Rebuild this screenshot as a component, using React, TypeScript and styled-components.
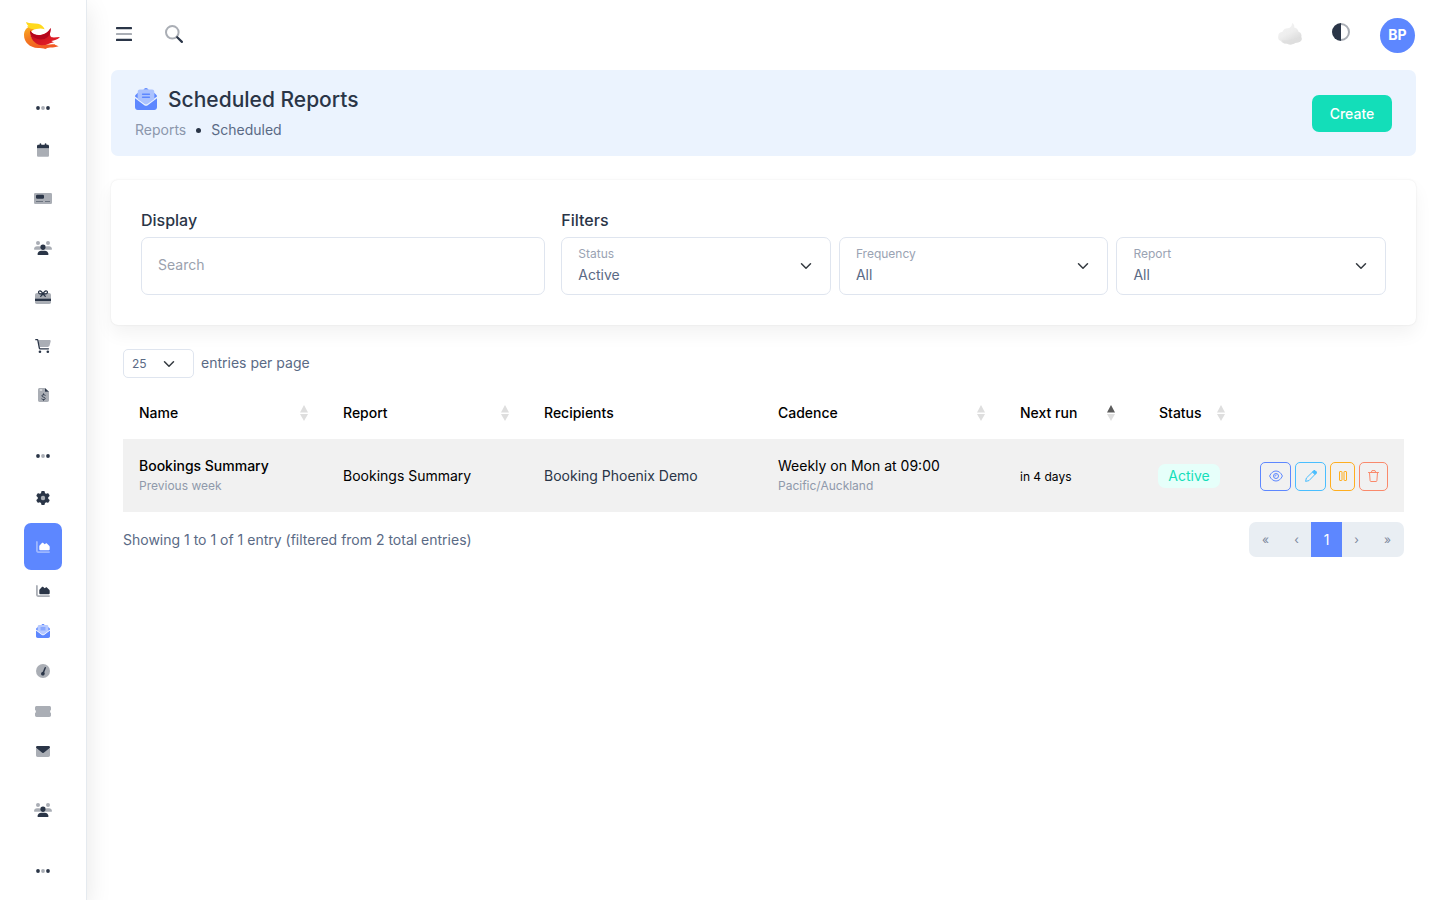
import React from "react";
import styled, { createGlobalStyle } from "styled-components";
import { FaGear } from "react-icons/fa6";

const ink = "#2a3547";
const body = "#5a6a85";
const blue = "#5d87ff";

const GlobalStyle = createGlobalStyle`
  *, *::before, *::after { box-sizing: border-box; }
  body {
    margin: 0;
    background: #fff;
    color: ${body};
    font-family: Inter, "Liberation Sans", sans-serif;
    font-size: 14px;
    font-weight: 400;
    line-height: 20px;
  }
  button, input, select { font: inherit; color: inherit; }
  a { color: inherit; text-decoration: none; }
  svg { display: block; flex: none; overflow: visible; }
`;

/* ---------- icons ---------- */

type IconProps = { w?: number; h?: number };

const Dots = () => (
  <svg width="14" height="14" viewBox="0 0 14 14" fill="currentColor">
    <circle cx="2" cy="7" r="1.9" />
    <circle cx="7" cy="7" r="1.9" opacity=".4" />
    <circle cx="12" cy="7" r="1.9" />
  </svg>
);

const CalendarIcon = () => (
  <svg width="12" height="14" viewBox="0 0 448 512" fill="currentColor">
    <path d="M96 32V64H48C21.500 64 0 85.500 0 112v80H448V112c0-26.500-21.500-48-48-48H352V32c0-17.700-14.300-32-32-32s-32 14.300-32 32V64H160V32c0-17.700-14.300-32-32-32S96 14.300 96 32z" />
    <path opacity=".4" d="M448 192H0V464c0 26.500 21.500 48 48 48H400c26.500 0 48-21.500 48-48V192z" />
  </svg>
);

const CardIcon = () => (
  <svg width="18" height="11" viewBox="0 0 18 11" fill="currentColor">
    <rect width="18" height="11" rx="1.300" opacity=".4" />
    <rect x="2" y="1.700" width="8" height="4" rx="1.200" />
    <path d="M2 8.500h7M11 8.500h5" stroke="currentColor" strokeWidth=".8" opacity=".6" />
  </svg>
);

const UsersIcon = () => (
  <svg width="18" height="14" viewBox="0 0 18 14" fill="currentColor">
    <g opacity=".4">
      <circle cx="4" cy="2" r="2" />
      <circle cx="14" cy="2" r="2" />
      <path d="M0 8.300C0 6.500 1.300 5.300 3 5.300h1.800c.4 0 .8.100 1.200.2-.1 1.300.3 2.500 1.200 3.300H.6c-.3 0-.6-.2-.6-.5zM18 8.300c0-1.800-1.300-3-3-3h-1.800c-.4 0-.8.100-1.200.2.1 1.300-.3 2.500-1.200 3.300h6.600c.3 0 .6-.2.600-.5z" />
    </g>
    <circle cx="9" cy="6.200" r="2.700" />
    <path d="M3.500 13.300C3.500 11.200 5.200 9.700 7.200 9.700h3.600c2 0 3.700 1.500 3.700 3.600 0 .4-.3.700-.7.700H4.200c-.4 0-.7-.3-.7-.7z" />
  </svg>
);

const GiftIcon = () => (
  <svg width="16" height="14" viewBox="0 0 16 14" fill="currentColor">
    <path opacity=".4" d="M2 3h12c1.100 0 2 .9 2 2v7.300c0 1-.7 1.700-1.700 1.700H1.700C.7 14 0 13.300 0 12.300V5c0-1.100.9-2 2-2z" />
    <path d="M0 8.700h16V11H0z" />
    <g fill="none" stroke="currentColor" strokeWidth="1.300" strokeLinecap="round">
      <path d="M8 4C6.800 1.200 5.400.6 4.300 1 3.200 1.500 3.300 3 4.400 3.600 5.400 4.100 6.800 4 8 4zM8 4c1.200-2.800 2.600-3.400 3.700-3 1.100.5 1 2-.1 2.600C10.600 4.100 9.200 4 8 4zM8 4L5.700 6.400M8 4l2.300 2.400" />
    </g>
  </svg>
);

const CartIcon = () => (
  <svg width="16" height="14" viewBox="0 0 576 512" fill="currentColor">
    <path opacity=".4" d="M120 32H531c26.300 0 45.500 25 38.600 50.400l-41 152.300c-8.500 31.400-37 53.300-69.500 53.300H168z" />
    <path d="M0 24C0 10.700 10.700 0 24 0H69.500c28 0 50 18 55 45L176 316.500c2.200 11.300 12.100 19.500 23.600 19.500H488c13.300 0 24 10.700 24 24s-10.700 24-24 24H199.700c-34.600 0-64.300-24.600-70.700-58.500L77.400 54.500c-.7-3.800-4-6.500-7.900-6.500H24C10.700 48 0 37.300 0 24z" />
    <circle cx="176" cy="464" r="48" />
    <circle cx="464" cy="464" r="48" />
  </svg>
);

const InvoiceIcon = () => (
  <svg width="11" height="14" viewBox="0 0 11 14">
    <path fill="currentColor" opacity=".4" d="M1.700 0H7v3.500h4v8.800c0 1-.7 1.700-1.700 1.700H1.700C.7 14 0 13.300 0 12.300V1.700C0 .7.700 0 1.700 0z" />
    <path fill="currentColor" d="M7 0l4 3.700H7z" />
    <path d="M1.800 2h2.400" stroke="#fff" strokeWidth="1" />
    <path fill="none" stroke="currentColor" strokeWidth=".9" strokeLinecap="round" d="M7.200 7.200C6.300 6.500 3.900 6.400 3.900 7.900c0 1.500 3.300 1 3.300 2.600 0 1.500-2.500 1.300-3.400.5M5.500 5.800v.7M5.500 11.700v.6" />
  </svg>
);

const GearIcon = () => (
  <svg width="14" height="14" viewBox="0 0 512 512" fill="currentColor">
    <circle cx="256" cy="256" r="90" opacity=".4" />
    <FaGear size={512} />
  </svg>
);

const ChartIcon = () => (
  <svg width="14" height="12" viewBox="0 0 14 12" fill="currentColor">
    <path opacity=".4" d="M.9 0c.5 0 .9.400.9.900v8.700c0 .4.200.6.600.6h10.700c.5 0 .9.400.9.900s-.4.900-.9.900H2.200C1 12 0 11 0 9.800V.9C0 .4.400 0 .9 0z" />
    <path d="M3.300 8.300V5.300c0-.2.100-.5.300-.7L5.900 2c.4-.4 1-.4 1.400 0L8.600 3.200l1.200-.8c.3-.3.800-.3 1.100 0l2.300 2.400c.3.300.5.800.5 1.200v2.300c0 .5-.4.900-.9.900H4.200c-.5 0-.9-.4-.9-.9z" />
  </svg>
);

const MailOpenIcon = ({ w = 14, h = 14 }: IconProps) => (
  <svg width={w} height={h} viewBox="0 0 512 512" fill={blue}>
    <path d="M215 17c24-20 58-20 82 0l20 15H195zM64 112V244L0 198c0-20 10-38 24-48zM448 112l40 38c14 10 24 28 24 48l-64 46z" />
    <path opacity=".45" d="M112 32H400c26 0 48 22 48 48V260L290 375c-20 15-48 15-68 0L64 260V80c0-26 22-48 48-48z" />
    <path d="M176 128H336c9 0 16 7 16 16s-7 16-16 16H176c-9 0-16-7-16-16s7-16 16-16zM176 200H336c9 0 16 7 16 16s-7 16-16 16H176c-9 0-16-7-16-16s7-16 16-16z" />
    <path d="M0 238L216 400c24 18 56 18 80 0L512 238V448c0 35-29 64-64 64H64c-35 0-64-29-64-64z" />
  </svg>
);

const GaugeIcon = () => (
  <svg width="14" height="14" viewBox="0 0 14 14" fill="currentColor">
    <circle cx="7" cy="7" r="7" opacity=".4" />
    <path d="M9.600 3.100c.4.200.5.600.3 1L8.300 8.300c.6.800.6 2-.1 2.700-.8.800-2.100.7-2.800-.1-.8-1.200-.2-2.900 1.400-3.200l1.800-4.200c.2-.4.600-.6 1-.4z" />
  </svg>
);

const TicketIcon = () => (
  <svg width="16" height="11" viewBox="0 0 16 11" fill="currentColor" opacity=".4">
    <path d="M1.700 0h12.600C15.300 0 16 .7 16 1.700v2.100C15.400 4.100 15.100 4.700 15.100 5.500S15.400 6.900 16 7.200v2.100c0 1-.7 1.700-1.700 1.700H1.700C.7 11 0 10.300 0 9.300V7.200c.6-.3.900-.9.900-1.700S.6 4.100 0 3.800V1.700C0 .7.700 0 1.700 0z" />
  </svg>
);

const MailIcon = () => (
  <svg width="14" height="11" viewBox="0 0 14 11" fill="currentColor">
    <path opacity=".4" d="M0 2l7 5 7-5v7.300c0 1-.7 1.700-1.700 1.700H1.700C.7 11 0 10.300 0 9.300z" />
    <path d="M1.300 0h11.400c.7 0 1.300.6 1.300 1.300 0 .4-.2.800-.5 1L7.800 6.700c-.5.300-1.100.3-1.600 0L.5 2.300C.2 2.100 0 1.700 0 1.300 0 .6.600 0 1.300 0z" />
  </svg>
);

const MenuIcon = () => (
  <svg width="16" height="14" viewBox="0 0 16 14" fill="currentColor">
    <rect width="16" height="2.200" rx=".6" />
    <rect y="5.900" width="16" height="2.200" rx=".6" opacity=".4" />
    <rect y="11.800" width="16" height="2.200" rx=".6" />
  </svg>
);

const SearchIcon = () => (
  <svg width="18" height="18" viewBox="0 0 18 18" fill="none" stroke="currentColor">
    <circle cx="7.300" cy="7.300" r="6.300" strokeWidth="2" opacity=".4" />
    <path d="M12.200 12.200l4.700 4.700" strokeWidth="2.200" strokeLinecap="round" />
  </svg>
);

const ContrastIcon = () => (
  <svg width="18" height="18" viewBox="0 0 18 18" fill="currentColor">
    <path opacity=".4" d="M9 0a9 9 0 0 1 0 18v-2A7 7 0 0 0 9 2z" />
    <path d="M9 0a9 9 0 0 0 0 18z" />
  </svg>
);

const CloudIcon = () => (
  <svg width="24" height="22" viewBox="0 0 24 22">
    <defs>
      <linearGradient id="cloud" x1="0" y1="0" x2=".6" y2="1">
        <stop offset="0" stopColor="#f5f5f5" />
        <stop offset=".55" stopColor="#eeeeee" />
        <stop offset="1" stopColor="#d9d9d9" />
      </linearGradient>
    </defs>
    <path fill="url(#cloud)" d="M14 0c2 1 2.700 2.600 2.200 4.500 2.500.5 4 2 4.300 4.300C23 9.500 24 12 23.300 14c1 2.600-.3 4.800-3 5.200-2 .3-3.300.7-4.800 1.500-2 1-4.700.9-6.600-.2C6.500 21 3.500 19.700 3 18 .6 17.500-.4 15.500.3 13 .3 10.500 2 9 4.500 8.800 5.500 6 7.500 5 10 5.200 12.500 4.800 14.300 3 14 0z" />
    <path fill="#dedede" opacity=".8" d="M4 17.500c5 .5 11-1.500 19.300-3 .9 2.500-.4 4.300-3 4.700-2 .3-3.300.7-4.800 1.500-2 1-4.700.9-6.600-.2C6.800 20.900 4.600 19.500 4 17.500z" />
  </svg>
);

const PhoenixLogo = () => (
  <svg width="36" height="27" viewBox="0 0 108 81">
    <defs>
      <linearGradient id="flame" x1="0" y1="0" x2=".5" y2="1">
        <stop offset="0" stopColor="#fbb321" />
        <stop offset=".5" stopColor="#f47a20" />
        <stop offset="1" stopColor="#f15a24" />
      </linearGradient>
      <linearGradient id="wing" x1="0" y1="0" x2="1" y2="1">
        <stop offset="0" stopColor="#b8091f" />
        <stop offset="1" stopColor="#ec2227" />
      </linearGradient>
    </defs>
    <path fill="url(#flame)" d="M24 12C8 14 0 26 0 39c0 22 17 38 42 39 8 0 16 0 22 3l6-3c10-2 22 0 34-5-6-2-9-3-12-6-24 1-52 1-64-13C17 42 16 26 34 20z" />
    <path fill="url(#wing)" d="M18 27c0 24 14 39 34 43 16 1 24-6 38-9-3-2-5-2-8-4 9-2 19-4 26-12-10 1-18 2-25 1C74 40 80 28 80 18 68 40 34 48 18 27z" />
    <path fill="#b5061d" d="M18 25c8 14 24 18 36 14 12-3 20-10 26-21 1 18-8 32-24 34-18 2-37-8-38-27z" />
    <path fill="#ffd91c" d="M6 0c12 6 24 3 36 5 10 2 16 8 20 17-10-4-16-3-25-1C24 23 16 20 9 12l5 1C9 9 8 5 6 0z" />
  </svg>
);

const Chevron = () => (
  <svg width="12" height="12" viewBox="0 0 16 16" fill="none" stroke="#343a40" strokeWidth="2" strokeLinecap="round" strokeLinejoin="round">
    <path d="m2 5 6 6 6-6" />
  </svg>
);

const EyeIcon = () => (
  <svg width="14" height="12" viewBox="0 0 14 12" fill="none" stroke={blue}>
    <path d="M.6 6C2 2.800 4.300 1 7 1s5 1.800 6.400 5C12 9.200 9.700 11 7 11S2 9.200.6 6z" />
    <circle cx="7" cy="6" r="2.500" />
    <path d="M7 4.500C7.200 5.600 6.600 6.200 5.500 6" />
  </svg>
);

const PencilIcon = () => (
  <svg width="12" height="12" viewBox="0 0 12 12" fill="none" stroke="#49beff" strokeLinejoin="round">
    <path d="M.6 11.400L1.400 8 8.700.9c.5-.4 1-.4 1.500 0l.9.900c.4.500.4 1 0 1.500L4 10.600z" />
    <path fill="#49beff" d="M7.500 2.100L8.700.9c.5-.4 1-.4 1.500 0l.9.900c.4.500.4 1 0 1.500L9.900 4.500z" />
  </svg>
);

const PauseIcon = () => (
  <svg width="8" height="10" viewBox="0 0 8 10" fill="none" stroke="#ffae1f">
    <rect x=".5" y=".5" width="2.500" height="9" rx=".5" />
    <rect x="5" y=".5" width="2.500" height="9" rx=".5" />
  </svg>
);

const TrashIcon = () => (
  <svg width="11" height="12" viewBox="0 0 11 12" fill="none" stroke="#fa896b" strokeLinecap="round" strokeLinejoin="round">
    <path d="M.5 2.500h10M3.300 2.300L4 .6h3l.7 1.700M1.500 2.700l.6 8c0 .5.300.8.800.8h5.200c.5 0 .8-.3.800-.8l.6-8" />
  </svg>
);

/* ---------- shell ---------- */

const Shell = styled.div`
  display: flex;
  min-height: 100vh;
`;

const Sidebar = styled.aside`
  flex: 0 0 87px;
  padding: 0 24px;
  background: #fff;
  border-right: 1px solid #e5eaef;
  box-shadow: 0 8px 24px rgba(0, 0, 0, 0.1);
`;

const Brand = styled.a`
  display: flex;
  align-items: center;
  height: 70px;
`;

const NavList = styled.ul`
  list-style: none;
  margin: 0;
  padding: 2px 0 0;
`;

const NavCaption = styled.li`
  display: flex;
  justify-content: center;
  height: 54px;
  padding-top: 29px;
  color: ${ink};
`;

const NavItem = styled.li<{ $sub?: boolean; $spaced?: boolean }>`
  margin-top: ${(p) => (p.$spaced ? 15 : 0)}px;
  margin-bottom: ${(p) => (p.$sub ? 0 : 2)}px;
`;

const SubNav = styled.ul`
  list-style: none;
  margin: 0;
  padding: 1px 0 0;
`;

const NavLink = styled.a<{ $active?: boolean; $sub?: boolean }>`
  display: flex;
  align-items: center;
  justify-content: center;
  height: ${(p) => (p.$sub ? 40 : 47)}px;
  border-radius: 7px;
  color: ${(p) => (p.$active ? "#fff" : ink)};
  background: ${(p) => (p.$active ? blue : "transparent")};
`;

const Main = styled.main`
  flex: 1;
  min-width: 0;
  padding: 0 24px;
`;

const Topbar = styled.header`
  display: flex;
  align-items: center;
  height: 70px;
  padding: 0 1px 0 5px;
`;

const IconButton = styled.button`
  display: flex;
  padding: 0 0 2px;
  border: 0;
  background: none;
  color: ${ink};
  cursor: pointer;
`;

const TopGroup = styled.div<{ $gap: number }>`
  display: flex;
  align-items: center;
  gap: ${(p) => p.$gap}px;
`;

const TopRight = styled(TopGroup)`
  margin-left: auto;
`;

const ThemeButton = styled(IconButton)`
  padding-bottom: 6px;
`;

const Avatar = styled.button`
  width: 35px;
  height: 35px;
  padding: 0;
  border: 0;
  border-radius: 50%;
  background: ${blue};
  color: #fff;
  font-weight: 700;
`;

/* ---------- page header ---------- */

const PageHeader = styled.section`
  display: flex;
  align-items: center;
  justify-content: space-between;
  height: 86px;
  padding: 0 24px;
  border-radius: 7px;
  background: #ebf3fe;
`;

const Title = styled.h1`
  display: flex;
  align-items: flex-start;
  gap: 11px;
  margin: 0 0 6px;
  color: ${ink};
  font-size: 21px;
  font-weight: 500;
  line-height: 28px;
`;

const TitleIcon = styled.span`
  padding-top: 2px;
`;

const Crumbs = styled.nav`
  display: flex;
  align-items: center;
  gap: 10px;
`;

const CrumbLink = styled.a`
  color: #8c97ac;
`;

const CrumbDot = styled.span`
  width: 5px;
  height: 5px;
  border-radius: 50%;
  background: ${ink};
`;

const CreateButton = styled.button`
  height: 37px;
  padding: 1px 16px 0;
  min-width: 80px;
  border: 0;
  border-radius: 7px;
  background: #13deb9;
  color: #fff;
  font-weight: 500;
`;

/* ---------- filters ---------- */

const FilterCard = styled.section`
  display: grid;
  grid-template-columns: repeat(3, 1fr);
  gap: 16px;
  margin: 24px 0;
  padding: 30px;
  border-radius: 7px;
  background: #fff;
  box-shadow: 0 0 2px rgba(0, 0, 0, 0.1), 0 9px 18px rgba(0, 0, 0, 0.05);
`;

const FilterGroup = styled.div<{ $span?: number }>`
  grid-column: span ${(p) => p.$span ?? 1};
`;

const GroupTitle = styled.h2`
  margin: 0 0 7px;
  color: ${ink};
  font-size: 16px;
  font-weight: 500;
  line-height: 20px;
`;

const SearchInput = styled.input`
  display: block;
  width: 100%;
  height: 58px;
  padding: 0 16px 3px;
  border: 1px solid #dfe5ef;
  border-radius: 7px;
  outline: 0;
  background: transparent;
  &::placeholder { color: #9aa1ad; opacity: 1; }
`;

const SelectRow = styled.div`
  display: grid;
  grid-template-columns: repeat(3, 1fr);
  gap: 8px;
`;

const SelectBox = styled.div`
  position: relative;
`;

const FloatingLabel = styled.label`
  position: absolute;
  top: 8px;
  left: 17px;
  color: #9aa3b3;
  font-size: 12px;
  line-height: 18px;
  pointer-events: none;
`;

const Select = styled.select<{ $small?: boolean }>`
  display: block;
  appearance: none;
  width: ${(p) => (p.$small ? "71px" : "100%")};
  height: ${(p) => (p.$small ? 29 : 58)}px;
  padding: ${(p) => (p.$small ? "0 32px 0 8px" : "18px 40px 0 16px")};
  border: 1px solid #dfe5ef;
  border-radius: ${(p) => (p.$small ? 5 : 7)}px;
  background: transparent;
  font-size: ${(p) => (p.$small ? 12 : 14)}px;
`;

const SelectArrow = styled.span`
  position: absolute;
  top: 50%;
  right: 19px;
  transform: translateY(-50%);
  pointer-events: none;
`;

/* ---------- table ---------- */

const TableArea = styled.section`
  padding: 0 12px;
`;

const LengthRow = styled.div`
  display: flex;
  gap: 7px;
  margin-bottom: 9px;
  line-height: 28px;
`;

const Table = styled.table`
  width: 100%;
  table-layout: fixed;
  border-collapse: collapse;
  color: #000;
`;

const Th = styled.th`
  height: 52px;
  padding: 0 16px;
  text-align: left;
  font-weight: 500;
`;

const HeadCell = styled.div<{ $center?: boolean }>`
  display: flex;
  align-items: center;
  justify-content: space-between;
  padding: 0 3px 0 ${(p) => (p.$center ? 9 : 0)}px;
`;

const SortMark = styled.svg`
  width: 8px;
  height: 16px;
`;

const Td = styled.td<{ $center?: boolean }>`
  height: 73px;
  padding: 1px 16px 0;
  background: #f1f1f1;
  text-align: ${(p) => (p.$center ? "center" : "left")};
  white-space: nowrap;
`;

const Strong = styled.div`
  font-weight: 500;
`;

const Muted = styled.div`
  color: #8f99ab;
  font-size: 12px;
`;

const Small = styled.span`
  font-size: 12px;
`;

const Dim = styled.span`
  color: ${ink};
`;

const Badge = styled.span`
  display: inline-block;
  height: 24px;
  padding: 0 10px;
  border-radius: 7px;
  background: #e6fffa;
  color: #13deb9;
  line-height: 24px;
`;

const Actions = styled.div`
  display: flex;
  gap: 4px;
`;

const ActionButton = styled.button<{ $color: string; $width: number }>`
  display: flex;
  align-items: center;
  justify-content: center;
  width: ${(p) => p.$width}px;
  height: 29px;
  padding: 0;
  border: 1px solid ${(p) => p.$color};
  border-radius: 5px;
  background: transparent;
`;

const TableFooter = styled.div`
  display: flex;
  align-items: center;
  justify-content: space-between;
  padding-top: 10px;
`;

const Pager = styled.nav`
  display: flex;
  height: 35px;
  border-radius: 7px;
  overflow: hidden;
  background: #e9eef3;
`;

const PageButton = styled.button<{ $current?: boolean; $width: number }>`
  width: ${(p) => p.$width}px;
  padding: 0;
  border: 0;
  background: ${(p) => (p.$current ? blue : "transparent")};
  color: ${(p) => (p.$current ? "#fff" : "#7c879c")};
  font-size: ${(p) => (p.$current ? 14 : 12)}px;
`;

const Sort = ({ asc }: { asc?: boolean }) => (
  <SortMark viewBox="0 0 8 16" fill="#dedede">
    <path d="M4 0l4 7.500H0z" fill={asc ? "#5c5c5c" : "#dedede"} />
    <path d="M4 16L0 9h8z" />
  </SortMark>
);

const columns: { name: string; width: number; sort?: boolean; asc?: boolean; center?: boolean }[] = [
  { name: "Name", width: 204, sort: true },
  { name: "Report", width: 201, sort: true },
  { name: "Recipients", width: 234 },
  { name: "Cadence", width: 242, sort: true },
  { name: "Next run", width: 130, sort: true, asc: true },
  { name: "Status", width: 110, sort: true, center: true },
  { name: "", width: 160 },
];

const filters = [
  { id: "status", label: "Status", value: "Active" },
  { id: "frequency", label: "Frequency", value: "All" },
  { id: "report", label: "Report", value: "All" },
];

const primaryNav = [
  { label: "Calendar", icon: <CalendarIcon /> },
  { label: "Bookings", icon: <CardIcon /> },
  { label: "Customers", icon: <UsersIcon /> },
  { label: "Gift cards", icon: <GiftIcon /> },
  { label: "Orders", icon: <CartIcon /> },
  { label: "Invoices", icon: <InvoiceIcon /> },
];

const reportNav = [
  { label: "Overview", icon: <ChartIcon /> },
  { label: "Scheduled reports", icon: <MailOpenIcon /> },
  { label: "Performance", icon: <GaugeIcon /> },
  { label: "Tickets", icon: <TicketIcon /> },
  { label: "Messages", icon: <MailIcon /> },
];

export default function App() {
  return (
    <>
      <GlobalStyle />
      <Shell>
        <Sidebar>
          <Brand href="#" aria-label="Home"><PhoenixLogo /></Brand>
          <NavList>
            <NavCaption><Dots /></NavCaption>
            {primaryNav.map((n) => (
              <NavItem key={n.label}>
                <NavLink href="#" aria-label={n.label}>{n.icon}</NavLink>
              </NavItem>
            ))}
            <NavCaption><Dots /></NavCaption>
            <NavItem><NavLink href="#" aria-label="Settings"><GearIcon /></NavLink></NavItem>
            <NavItem $sub>
              <NavLink href="#" aria-label="Reports" $active><ChartIcon /></NavLink>
              <SubNav>
                {reportNav.map((n) => (
                  <NavItem key={n.label} $sub>
                    <NavLink href="#" aria-label={n.label} $sub>{n.icon}</NavLink>
                  </NavItem>
                ))}
              </SubNav>
            </NavItem>
            <NavItem $spaced><NavLink href="#" aria-label="Team"><UsersIcon /></NavLink></NavItem>
            <NavCaption><Dots /></NavCaption>
          </NavList>
        </Sidebar>

        <Main>
          <Topbar>
            <TopGroup $gap={33}>
              <IconButton aria-label="Toggle menu"><MenuIcon /></IconButton>
              <IconButton aria-label="Search"><SearchIcon /></IconButton>
            </TopGroup>
            <TopRight $gap={30}>
              <IconButton aria-label="Cloud"><CloudIcon /></IconButton>
              <ThemeButton aria-label="Toggle theme"><ContrastIcon /></ThemeButton>
              <Avatar>BP</Avatar>
            </TopRight>
          </Topbar>

          <PageHeader>
            <div>
              <Title><TitleIcon><MailOpenIcon w={22} h={22} /></TitleIcon>Scheduled Reports</Title>
              <Crumbs aria-label="Breadcrumb">
                <CrumbLink href="#">Reports</CrumbLink>
                <CrumbDot />
                <span>Scheduled</span>
              </Crumbs>
            </div>
            <CreateButton>Create</CreateButton>
          </PageHeader>

          <FilterCard>
            <FilterGroup>
              <GroupTitle>Display</GroupTitle>
              <SearchInput type="search" placeholder="Search" aria-label="Search" />
            </FilterGroup>
            <FilterGroup $span={2}>
              <GroupTitle>Filters</GroupTitle>
              <SelectRow>
                {filters.map((f) => (
                  <SelectBox key={f.id}>
                    <FloatingLabel htmlFor={f.id}>{f.label}</FloatingLabel>
                    <Select id={f.id}><option>{f.value}</option></Select>
                    <SelectArrow><Chevron /></SelectArrow>
                  </SelectBox>
                ))}
              </SelectRow>
            </FilterGroup>
          </FilterCard>

          <TableArea>
            <LengthRow>
              <SelectBox>
                <Select id="length" $small><option>25</option></Select>
                <SelectArrow><Chevron /></SelectArrow>
              </SelectBox>
              <label htmlFor="length">entries per page</label>
            </LengthRow>

            <Table>
              <colgroup>
                {columns.map((c) => <col key={c.name} width={c.width} />)}
              </colgroup>
              <thead>
                <tr>
                  {columns.map((c) => (
                    <Th key={c.name} scope="col">
                      <HeadCell $center={c.center}>
                        {c.name}
                        {c.sort && <Sort asc={c.asc} />}
                      </HeadCell>
                    </Th>
                  ))}
                </tr>
              </thead>
              <tbody>
                <tr>
                  <Td><Strong>Bookings Summary</Strong><Muted>Previous week</Muted></Td>
                  <Td>Bookings Summary</Td>
                  <Td><Dim>Booking Phoenix Demo</Dim></Td>
                  <Td><div>Weekly on Mon at 09:00</div><Muted>Pacific/Auckland</Muted></Td>
                  <Td><Small>in 4 days</Small></Td>
                  <Td $center><Badge>Active</Badge></Td>
                  <Td>
                    <Actions>
                      <ActionButton $color={blue} $width={31} aria-label="View"><EyeIcon /></ActionButton>
                      <ActionButton $color="#49beff" $width={31} aria-label="Edit"><PencilIcon /></ActionButton>
                      <ActionButton $color="#ffae1f" $width={25} aria-label="Pause"><PauseIcon /></ActionButton>
                      <ActionButton $color="#fa896b" $width={29} aria-label="Delete"><TrashIcon /></ActionButton>
                    </Actions>
                  </Td>
                </tr>
              </tbody>
            </Table>

            <TableFooter>
              <div>Showing 1 to 1 of 1 entry (filtered from 2 total entries)</div>
              <Pager aria-label="Pagination">
                <PageButton $width={33}>«</PageButton>
                <PageButton $width={29}>‹</PageButton>
                <PageButton $width={31} $current>1</PageButton>
                <PageButton $width={29}>›</PageButton>
                <PageButton $width={33}>»</PageButton>
              </Pager>
            </TableFooter>
          </TableArea>
        </Main>
      </Shell>
    </>
  );
}
